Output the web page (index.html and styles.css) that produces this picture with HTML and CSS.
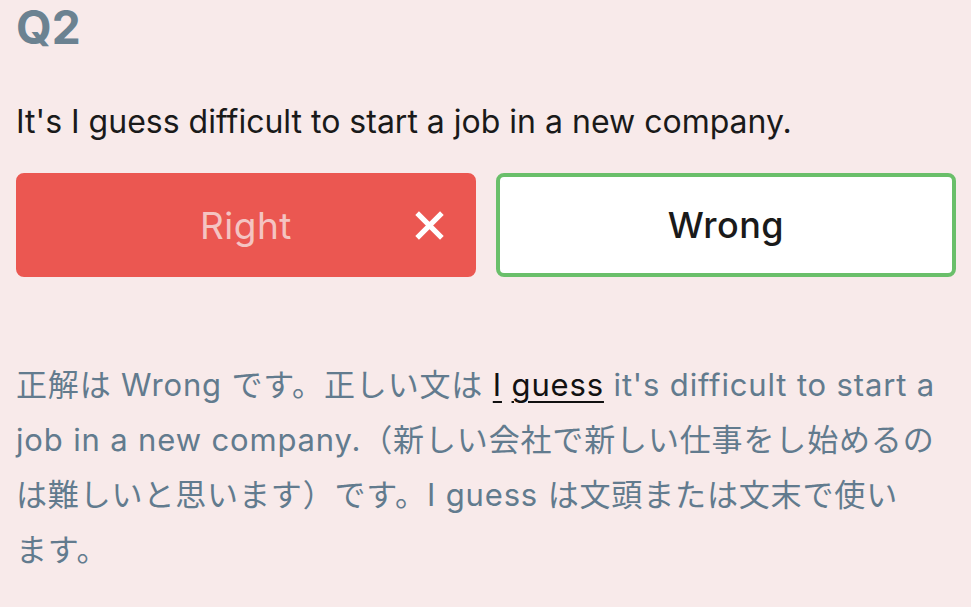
FILE: index.html
```html
<!DOCTYPE html>
<html lang="ja">
<head>
<meta charset="utf-8">
<link rel="stylesheet" href="styles.css">
</head>
<body>
<main class="quiz">
  <h1 class="qnum">Q2</h1>
  <p class="sentence">It's I guess difficult to start a job in a new company.</p>
  <div class="choices">
    <button class="choice choice-wrong-picked">
      <span class="choice-label">Right</span>
      <svg class="xmark" viewBox="0 0 32 32" width="32" height="32"><path d="M4 4 L28 28 M28 4 L4 28" stroke="#fff" stroke-width="5" stroke-linecap="butt"/></svg>
    </button>
    <button class="choice choice-correct">
      <span class="choice-label">Wrong</span>
    </button>
  </div>
  <p class="explain">正解は Wrong です。正しい文は <span class="ul">I</span> <span class="ul">guess</span> it's difficult to start a job in a new company.（新しい会社で新しい仕事をし始めるのは難しいと思います）です。I guess は文頭または文末で使い<span class="keep">ます。</span></p>
</main>
</body>
</html>
```

FILE: styles.css
```css
* { box-sizing: border-box; }
html, body { margin: 0; padding: 0; }
body {
  background: #f8eaea;
  font-family: Inter, "Noto Sans CJK JP", sans-serif;
  width: 971px;
  height: 607px;
  overflow: hidden;
}
.quiz {
  padding: 0 15px 0 16px;
}
.qnum {
  margin: 0;
  padding-top: 2px;
  font-size: 46px;
  line-height: 50px;
  font-weight: 700;
  color: #6b8291;
}
.sentence {
  margin: 50px 0 0 0;
  font-size: 32px;
  line-height: 40px;
  color: #1a1a1a;
}
.choices {
  display: flex;
  gap: 20px;
  margin-top: 31px;
}
.choice {
  flex: 1;
  height: 104px;
  border-radius: 8px;
  border: 4px solid transparent;
  font-family: Inter, "Noto Sans CJK JP", sans-serif;
  font-size: 37px;
  letter-spacing: 0.5px;
  position: relative;
  display: flex;
  align-items: center;
  justify-content: center;
  padding: 0;
}
.choice-wrong-picked {
  background: #eb5751;
  border-color: #eb5751;
  color: #f4c4c2;
}
.choice-correct {
  background: #fff;
  border-color: #6abf6a;
  color: #1a1a1a;
  font-weight: 500;
  font-size: 36px;
}
.xmark {
  position: absolute;
  left: 393px;
  top: 32px;
  width: 33px;
  height: 33px;
}
.explain {
  margin: 80px 0 0 0;
  padding-right: 0;
  font-size: 31px;
  letter-spacing: 0.85px;
  line-height: 55px;
  color: #627b8e;
  text-spacing-trim: space-all;
}
.keep {
  white-space: nowrap;
}
.ul {
  color: #111;
  text-decoration: underline;
  text-decoration-thickness: 2px;
  text-underline-offset: 5px;
}
```
